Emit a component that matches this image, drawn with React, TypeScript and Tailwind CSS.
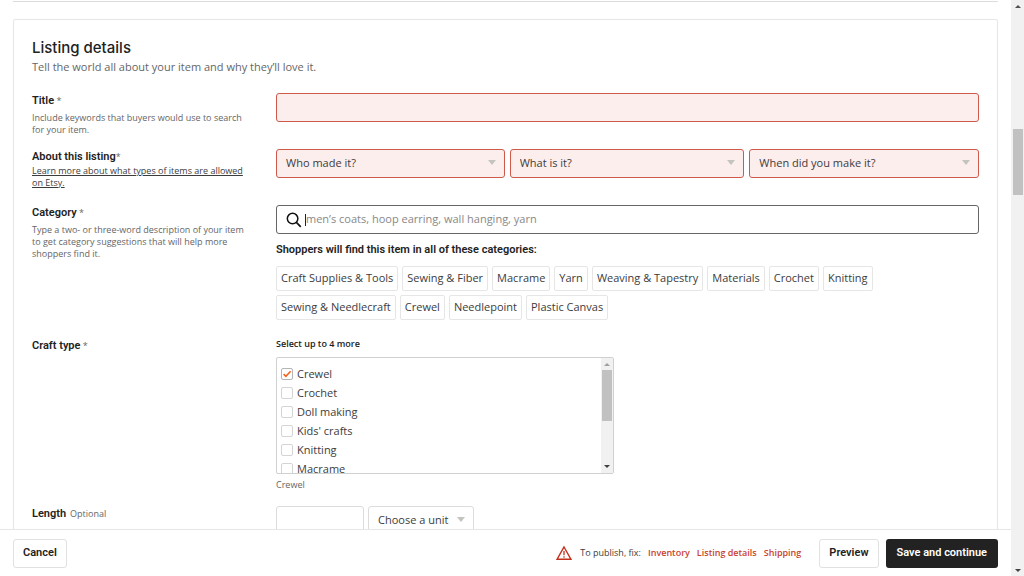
import { useState, type ReactNode } from 'react'
import clsx from 'clsx'

const categories = [
  'Craft Supplies & Tools',
  'Sewing & Fiber',
  'Macrame',
  'Yarn',
  'Weaving & Tapestry',
  'Materials',
  'Crochet',
  'Knitting',
  'Sewing & Needlecraft',
  'Crewel',
  'Needlepoint',
  'Plastic Canvas',
]

const craftTypes = ['Crewel', 'Crochet', 'Doll making', "Kids' crafts", 'Knitting', 'Macrame']

const missingSections = ['Inventory', 'Listing details', 'Shipping']

interface SelectFieldProps {
  label: string
  invalid?: boolean
}

function SelectField({ label, invalid }: SelectFieldProps) {
  return (
    <div className="relative">
      <select
        aria-label={label}
        className={clsx(
          'block h-[29px] w-full appearance-none rounded-[3px] border pl-[9px] pr-6 text-[11px] text-[#3c3c3c]',
          invalid ? 'border-[#cf5a4c] bg-[#fceeed]' : 'border-[#dcdcdc] bg-white'
        )}
      >
        <option>{label}</option>
      </select>
      <svg
        viewBox="0 0 8 5"
        className="pointer-events-none absolute right-[9px] top-[11px] h-[5px] w-2 fill-[#c3c3c0]"
      >
        <path d="M0 0h8L4 5z" />
      </svg>
    </div>
  )
}

interface RowProps {
  htmlFor?: string
  label: string
  mark?: ReactNode
  hint?: ReactNode
  className?: string
  children: ReactNode
}

function Row({ htmlFor, label, mark, hint, className, children }: RowProps) {
  return (
    <div className={clsx('grid grid-cols-[220px_1fr] gap-x-6', className)}>
      <div className="text-[9px] leading-3 text-[#666]">
        <label htmlFor={htmlFor} className="font-['Roboto',sans-serif] text-[11px] leading-4 font-semibold text-[#222]">
          {label}
        </label>
        {mark}
        {hint}
      </div>
      <div className="min-w-0">{children}</div>
    </div>
  )
}

function CraftTypeList() {
  const [selected, setSelected] = useState<string[]>(['Crewel'])

  const toggle = (name: string) => {
    setSelected((prev) => (prev.includes(name) ? prev.filter((n) => n !== name) : [...prev, name]))
  }

  return (
    <>
      <p className="text-[9px] leading-3 font-semibold text-[#222]">Select up to 4 more</p>
      <div className="mt-[7px] flex h-[117px] w-full max-w-[338px] overflow-hidden rounded-[2px] border border-[#d0d0d0]">
        <div className="flex-1 overflow-hidden pl-1 pt-[7px]">
          {craftTypes.map((name) => (
            <label key={name} className="flex h-[19px] items-center gap-1 text-[11px] text-[#3c3c3c]">
              <span className="relative mb-0.5">
                <input
                  type="checkbox"
                  checked={selected.includes(name)}
                  onChange={() => toggle(name)}
                  className="block size-3 appearance-none rounded-[2px] border border-[#d4d4d4] bg-white checked:border-[#b5b5b5]"
                />
                {selected.includes(name) && (
                  <svg viewBox="0 0 12 12" className="pointer-events-none absolute inset-0 size-3">
                    <path d="M2.6 6.2 4.9 8.4 9.6 3.2" fill="none" stroke="#f1641e" strokeWidth="1.6" />
                  </svg>
                )}
              </span>
              {name}
            </label>
          ))}
        </div>
        <div className="flex w-3 flex-col items-center bg-[#f1f1f1]">
          <svg viewBox="0 0 12 12" className="size-3 fill-[#a0a0a0]">
            <path d="M3 8h6L6 5z" />
          </svg>
          <div className="h-[51px] w-[10px] bg-[#c1c1c1]" />
          <svg viewBox="0 0 12 12" className="mt-auto mb-px size-3 fill-[#404040]">
            <path d="M3 5h6L6 8z" />
          </svg>
        </div>
      </div>
      <p className="mt-[5px] text-[9px] leading-3 text-[#666]">{selected.join(', ')}</p>
    </>
  )
}

function ListingDetails() {
  return (
    <section className="mt-[17px] rounded-[2px] border border-[#e6e6e6] px-[18px] pt-[18px] pb-10">
      <h2 className="font-['Inter',sans-serif] text-[15px] leading-5 font-medium text-[#222]">Listing details</h2>
      <p className="mt-px text-[11px] leading-4 text-[#666]">
        Tell the world all about your item and why they’ll love it.
      </p>

      <Row
        htmlFor="title"
        label="Title"
        mark=" *"
        className="mt-[18px]"
        hint={
          <p className="mt-[3px]">
            Include keywords that buyers would use to search for your item.
          </p>
        }
      >
        <input
          id="title"
          type="text"
          className="block h-[29px] w-full rounded-[3px] border border-[#cf5a4c] bg-[#fceeed] px-2 text-[11px]"
        />
      </Row>

      <Row
        label="About this listing"
        mark="*"
        className="mt-[13px]"
        hint={
          <a href="#types" className="block text-[#3c3c3c] underline">
            Learn more about what types of items are allowed on Etsy.
          </a>
        }
      >
        <div className="grid grid-cols-[229fr_235fr_230fr] gap-[5px]">
          <SelectField label="Who made it?" invalid />
          <SelectField label="What is it?" invalid />
          <SelectField label="When did you make it?" invalid />
        </div>
      </Row>

      <Row
        htmlFor="category"
        label="Category"
        mark=" *"
        className="mt-4"
        hint={
          <p className="mt-[3px]">
            Type a two- or three-word description of your item to get category suggestions that will help more
            shoppers find it.
          </p>
        }
      >
        <div className="flex h-[29px] items-center rounded-[3px] border border-[#666] pl-[9px]">
          <svg viewBox="0 0 17 17" className="size-4 fill-none stroke-[#111]">
            <circle cx="7" cy="7" r="5.6" strokeWidth="1.6" />
            <path d="m11 11 4.7 4.7" strokeWidth="1.8" />
          </svg>
          <span className="ml-[3px] h-3 w-px bg-[#222]" />
          <input
            id="category"
            type="text"
            placeholder="men’s coats, hoop earring, wall hanging, yarn"
            className="min-w-0 flex-1 text-[11px] text-[#222] outline-none placeholder:text-[#888]"
          />
        </div>
        <p className="mt-2 font-['Roboto',sans-serif] text-[11px] leading-4 font-semibold text-[#222]">
          Shoppers will find this item in all of these categories:
        </p>
        <ul className="mt-2 flex flex-wrap gap-1">
          {categories.map((name) => (
            <li
              key={name}
              className="flex h-[25px] items-center rounded-[2px] border border-[#e6e6e6] px-1 text-[11px] text-[#3c3c3c]"
            >
              {name}
            </li>
          ))}
        </ul>
      </Row>

      <Row label="Craft type" mark=" *" className="mt-[18px]">
        <CraftTypeList />
      </Row>

      <Row
        htmlFor="length"
        label="Length"
        mark={<span className="ml-1">Optional</span>}
        className="mt-[15px]"
      >
        <div className="flex gap-1">
          <input
            id="length"
            type="text"
            className="h-[29px] w-[88px] rounded-[3px] border border-[#dcdcdc] px-2 text-[11px]"
          />
          <div className="w-[106px]">
            <SelectField label="Choose a unit" />
          </div>
        </div>
      </Row>
    </section>
  )
}

function ActionBar() {
  return (
    <footer className="flex h-[47px] shrink-0 items-center border-t border-[#e6e6e6] bg-white px-[13px] font-['Roboto',sans-serif] text-[11px]">
      <button className="h-[29px] rounded-[3px] border border-[#e1e1e1] px-[9px] font-semibold text-[#222]">
        Cancel
      </button>
      <div className="ml-auto flex items-center font-['Open_Sans',sans-serif] text-[9px] text-[#3c3c3c]">
        <svg viewBox="0 0 16 16" className="mr-2 size-4 fill-none stroke-[#c5301d]">
          <path d="M8 2 15 14.3H1z" strokeWidth="1.4" />
          <path d="M8 6v4.3M8 11.3v1.4" strokeWidth="1.3" />
        </svg>
        <span>To publish, fix:</span>
        {missingSections.map((name) => (
          <a key={name} href="#fix" className="ml-[7px] font-semibold text-[#c9412f]">
            {name}
          </a>
        ))}
      </div>
      <button className="ml-[18px] h-[29px] rounded-[3px] border border-[#e1e1e1] px-[9px] font-semibold text-[#222]">
        Preview
      </button>
      <button className="ml-[7px] h-[29px] rounded-[3px] bg-[#222] px-[11px] font-semibold text-white">
        Save and continue
      </button>
    </footer>
  )
}

function PageScrollbar() {
  return (
    <div className="flex w-[13px] shrink-0 flex-col items-center bg-[#f1f1f1]">
      <div className="h-[129px]">
        <svg viewBox="0 0 12 12" className="size-3 fill-[#505050]">
          <path d="M3 8h6L6 5z" />
        </svg>
      </div>
      <div className="h-[66px] w-[10px] bg-[#c1c1c1]" />
      <svg viewBox="0 0 12 12" className="mt-auto size-3 fill-[#404040]">
        <path d="M3 5h6L6 8z" />
      </svg>
    </div>
  )
}

export default function App() {
  return (
    <div className="flex h-screen bg-white font-['Open_Sans',sans-serif] text-[#222]">
      <div className="flex min-w-0 flex-1 flex-col">
        <main className="min-h-0 flex-1 overflow-hidden px-[13px]">
          <div className="h-0.5 border-b border-[#dcdcdc]" />
          <ListingDetails />
        </main>
        <ActionBar />
      </div>
      <PageScrollbar />
    </div>
  )
}
